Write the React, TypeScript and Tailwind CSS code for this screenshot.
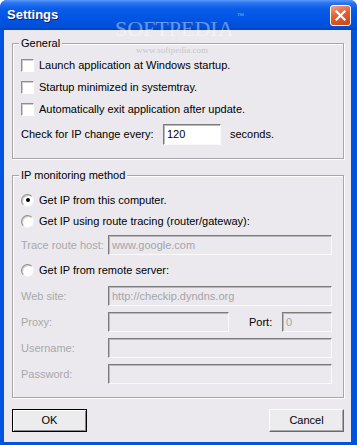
import type { ReactNode } from "react";

const font = { fontFamily: '"Liberation Sans", Arial, sans-serif' };

function CheckBox({ label }: { label: string }) {
  return (
    <div className="flex h-[22px] items-center pl-[8px]">
      <div className="h-[13px] w-[13px] border border-t-[#8e8e8e] border-l-[#8e8e8e] border-b-[#fff] border-r-[#fff] bg-white shadow-[inset_1px_1px_0_#cfcdd1]" />
      <span className="ml-[5px] text-black">{label}</span>
    </div>
  );
}

function Radio({ label, checked, h }: { label: string; checked?: boolean; h: string }) {
  return (
    <div className={`flex items-center pl-[8px] ${h}`}>
      <div className="flex h-[13px] w-[13px] items-center justify-center rounded-full border border-t-[#8e8e8e] border-l-[#8e8e8e] border-b-[#f4f4f4] border-r-[#f4f4f4] bg-white shadow-[inset_1px_1px_0_#c8c6ca]">
        {checked && <div className="h-[4px] w-[4px] rounded-full bg-black" />}
      </div>
      <span className="ml-[5px] text-black">{label}</span>
    </div>
  );
}

function Edit({ w, value, enabled }: { w: string; value?: string; enabled?: boolean }) {
  return (
    <div
      className={`flex h-[20px] items-center border border-t-[#7c7c7c] border-l-[#7c7c7c] border-b-[#fafafa] border-r-[#fafafa] pl-[3px] shadow-[inset_1px_1px_0_#b9b8bc] ${w} ${
        enabled ? "bg-white text-black" : "bg-[#ebe9ed] text-[#a6a5a9]"
      }`}
    >
      {value}
    </div>
  );
}

function FieldRow({ label, children, mt }: { label: string; children: ReactNode; mt: string }) {
  return (
    <div className={`flex items-center pl-[8px] ${mt}`}>
      <span className="w-[87px] text-[#a9a8ac]">{label}</span>
      {children}
    </div>
  );
}

function GroupBox({ title, h, children }: { title: string; h: string; children: ReactNode }) {
  return (
    <div
      className={`relative border border-[#a7a6aa] shadow-[inset_1px_1px_0_#fff,1px_1px_0_#fff] ${h}`}
    >
      <span className="absolute left-[6px] top-[-8px] bg-[#ebe9ed] px-[2px] leading-[14px] text-black">
        {title}
      </span>
      {children}
    </div>
  );
}

function XpButton({ label, isDefault }: { label: string; isDefault?: boolean }) {
  return (
    <div
      className={`flex h-[23px] w-[75px] items-center justify-center bg-[#ecebee] text-black ${
        isDefault
          ? "border border-black shadow-[inset_1px_1px_0_#fff,inset_-1px_-1px_0_#8a898d]"
          : "border border-t-[#fff] border-l-[#fff] border-b-[#6a696d] border-r-[#6a696d] shadow-[inset_-1px_-1px_0_#a8a7ab]"
      }`}
    >
      {label}
    </div>
  );
}

export default function App() {
  return (
    <div className="relative h-[445px] w-[357px] overflow-hidden bg-white text-[11px]" style={font}>
      <div className="flex h-full flex-col rounded-t-[7px] bg-[#0053e1]">
        {/* title bar */}
        <div className="flex h-[30px] shrink-0 items-center justify-between rounded-t-[7px] bg-[linear-gradient(180deg,#5b9af8_0%,#2a74f0_10%,#0a5ce8_30%,#0054e3_65%,#0050d8_88%,#0043c4_100%)] pl-[7px] pr-[6px]">
          <span className="text-[13px] font-bold text-white [text-shadow:1px_1px_0_#0a1f7a]">
            Settings
          </span>
          <div className="flex h-[21px] w-[21px] items-center justify-center rounded-[3px] border border-white bg-[linear-gradient(160deg,#f4a283_0%,#e45e34_45%,#cc4512_100%)]">
            <svg width="11" height="11" viewBox="0 0 11 11">
              <path d="M1.5 1.5 L9.5 9.5 M9.5 1.5 L1.5 9.5" stroke="#fff" strokeWidth="2.2" strokeLinecap="square" />
            </svg>
          </div>
        </div>

        {/* client area */}
        <div className="flex flex-1 flex-col pb-[3px] pl-[4px] pr-[6px]">
          <div className="flex flex-1 flex-col bg-[#ebe9ed] pl-[8px] pr-[7px] pt-[13px]">
            <GroupBox title="General" h="h-[116px]">
              <div className="pt-[10px]">
                <CheckBox label="Launch application at Windows startup." />
                <CheckBox label="Startup minimized in systemtray." />
                <CheckBox label="Automatically exit application after update." />
                <div className="mt-[4px] flex h-[21px] items-center pl-[8px]">
                  <span className="w-[142px]">Check for IP change every:</span>
                  <div className="flex h-[21px] w-[58px] items-center border border-t-[#7c7c7c] border-l-[#7c7c7c] border-b-[#fafafa] border-r-[#fafafa] bg-white pl-[3px] shadow-[inset_1px_1px_0_#b9b8bc]">
                    120
                  </div>
                  <span className="ml-[9px]">seconds.</span>
                </div>
              </div>
            </GroupBox>

            <div className="mt-[16px]">
              <GroupBox title="IP monitoring method" h="h-[223px]">
                <div className="pt-[13px]">
                  <Radio label="Get IP from this computer." checked h="h-[22px]" />
                  <Radio label="Get IP using route tracing (router/gateway):" h="h-[21px]" />
                  <FieldRow label="Trace route host:" mt="mt-[3px]">
                    <Edit w="w-[224px]" value="www.google.com" />
                  </FieldRow>
                  <div className="mt-[4px]">
                    <Radio label="Get IP from remote server:" h="h-[22px]" />
                  </div>
                  <FieldRow label="Web site:" mt="mt-[5px]">
                    <Edit w="w-[224px]" value="http://checkip.dyndns.org" />
                  </FieldRow>
                  <FieldRow label="Proxy:" mt="mt-[6px]">
                    <Edit w="w-[121px]" />
                    <span className="ml-[20px] w-[33px] text-black">Port:</span>
                    <Edit w="w-[50px]" value="0" />
                  </FieldRow>
                  <FieldRow label="Username:" mt="mt-[6px]">
                    <Edit w="w-[224px]" />
                  </FieldRow>
                  <FieldRow label="Password:" mt="mt-[6px]">
                    <Edit w="w-[224px]" />
                  </FieldRow>
                </div>
              </GroupBox>
            </div>

            <div className="mt-[11px] flex justify-between">
              <XpButton label="OK" isDefault />
              <XpButton label="Cancel" />
            </div>
          </div>
        </div>
      </div>

      {/* watermark */}
      <div className="pointer-events-none absolute left-[115px] top-[18px] text-[22px] leading-[22px] text-white opacity-40 [font-family:'Liberation_Serif',serif]">
        SOFTPEDIA
      </div>
      <div className="pointer-events-none absolute left-[237px] top-[12px] text-[7px] leading-[8px] text-white opacity-50 [font-family:'Liberation_Serif',serif]">
        ™
      </div>
      <div className="pointer-events-none absolute left-[136px] top-[45px] text-[9px] leading-[10px] text-[#c9c7cb] [font-family:'Liberation_Serif',serif]">
        www.softpedia.com
      </div>
    </div>
  );
}
